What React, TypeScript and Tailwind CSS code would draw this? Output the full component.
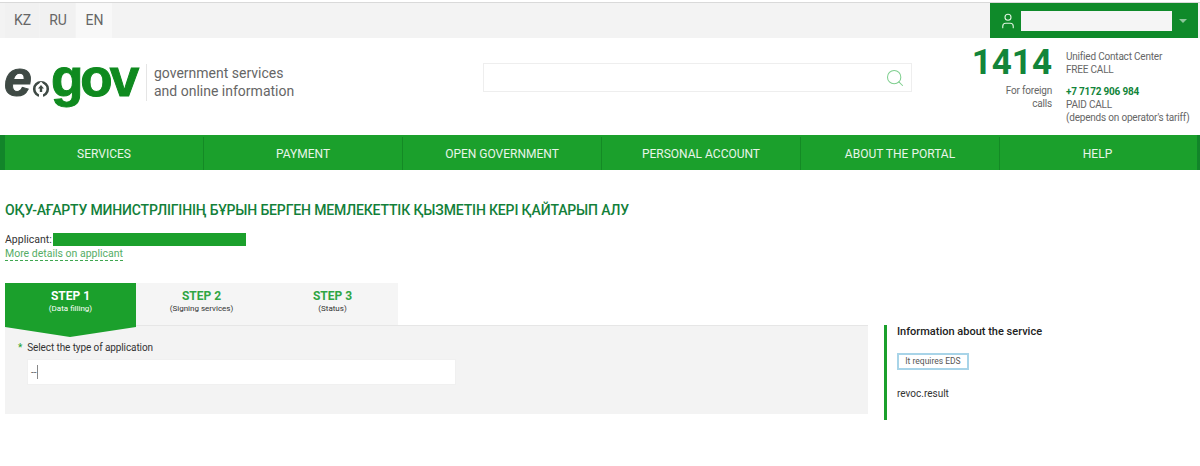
import { Search, User } from "lucide-react";

const font = { fontFamily: 'Roboto, sans-serif' };

const navItems = ["SERVICES", "PAYMENT", "OPEN GOVERNMENT", "PERSONAL ACCOUNT", "ABOUT THE PORTAL", "HELP"];

const steps = [
  { title: "STEP 1", sub: "(Data filling)", active: true },
  { title: "STEP 2", sub: "(Signing services)", active: false },
  { title: "STEP 3", sub: "(Status)", active: false },
];

const Logo = () => (
  <div className="relative h-[44px] w-[141px] shrink-0 whitespace-nowrap font-['Liberation_Sans']">
    <span className="absolute left-[-1px] top-[-6px] text-[50px] leading-[50px] font-bold italic text-[#3f4a45] [-webkit-text-stroke:1px_#3f4a45]">
      e
    </span>
    <svg width="18" height="18" viewBox="0 0 18 18" className="absolute left-[27px] top-[20px]">
      <circle cx="9" cy="9" r="6.8" fill="none" stroke="#3f4a45" strokeWidth="2.6" />
      <path d="M9 1.5 L14.5 7.5 H11 V17 H7 V7.5 H3.5 Z" fill="#fff" />
      <path d="M9 5 L12 8.5 H10.2 V12 H7.8 V8.5 H6 Z" fill="#3f4a45" />
    </svg>
    <span className="absolute left-[46px] top-[-7px] text-[53px] leading-[50px] font-bold tracking-[-3px] text-[#0f8a1f] [-webkit-text-stroke:1px_#0f8a1f]">
      gov
    </span>
  </div>
);

export default function App() {
  return (
    <div className="h-[466px] w-[1200px] overflow-hidden bg-white text-[#333]" style={font}>
      {/* Top bar */}
      <div className="mt-[2px] flex h-[36px] justify-between border-t border-[#d9d9d9] bg-[#f3f3f3] pl-[5px] pr-[2px]">
        <div className="flex gap-px text-[14px] text-[#666]">
          <div className="flex w-[34px] items-center justify-center bg-[#f1f1f1] pl-px">KZ</div>
          <div className="flex w-[35px] items-center justify-center bg-[#f1f1f1] pl-px">RU</div>
          <div className="flex w-[36px] items-center justify-center bg-[#f8f8f8] pl-px">EN</div>
        </div>
        <div className="flex w-[208px] items-center bg-[#0f8a2a]">
          <User size={18} strokeWidth={1.5} className="ml-[9px] shrink-0 text-[#dff3e0]" />
          <div className="ml-[4px] h-[20px] w-[151px] bg-[#f5f5f5]" />
          <div className="ml-[7px] h-0 w-0 border-x-[4px] border-t-[4px] border-x-transparent border-t-[#8cc79a]" />
        </div>
      </div>

      {/* Header */}
      <div className="flex h-[97px] pl-[5px]">
        <div className="mt-[22px]">
          <Logo />
        </div>
        <div className="mt-[26px] h-[37px] w-[136px] shrink-0 whitespace-nowrap border-l border-[#e5e5e5] pl-[7px] text-[14px] leading-[18px] text-[#666]">
          <div>government services</div>
          <div>and online information</div>
        </div>
        <div className="ml-[201px] mt-[25px] flex h-[29px] w-[429px] shrink-0 items-center justify-end border border-[#eeeeee] pr-[6px]">
          <Search size={20} strokeWidth={1.25} className="text-[#7fcf8f]" />
        </div>
        <div className="ml-[59px] mt-[6px] w-[81px] shrink-0 text-right">
          <div className="text-[35px] leading-[37px] font-bold text-[#12853a]">1414</div>
          <div className="mt-[4px] text-[10px] leading-[12.5px] tracking-[-0.2px] text-[#666]">
            For foreign
            <br />
            calls
          </div>
        </div>
        <div className="ml-[14px] mt-[12px] whitespace-nowrap text-[10px] leading-[13px] tracking-[-0.2px] text-[#666]">
          <div>Unified Contact Center</div>
          <div>FREE CALL</div>
          <div className="mt-[9px] font-bold text-[#12853a]">+7 7172 906 984</div>
          <div>PAID CALL</div>
          <div>(depends on operator's tariff)</div>
        </div>
      </div>

      {/* Nav */}
      <div className="flex h-[35px] border-x-[5px] border-r-[3px] border-[#12852a] bg-[#1ba02c] pt-[2px] text-[12px] text-[#e8f5e9]">
        {navItems.map((item, i) => (
          <div
            key={item}
            className={`flex w-[199px] shrink-0 items-center justify-center ${i < 5 ? "border-r border-[#148a25]" : "pr-[4px]"}`}
          >
            {item}
          </div>
        ))}
      </div>

      {/* Content */}
      <div className="px-[5px]">
        <h1 className="mt-[30px] whitespace-nowrap text-[14px] leading-[20px] font-medium tracking-[-0.15px] text-[#13803a]">
          ОҚУ-АҒАРТУ МИНИСТРЛІГІНІҢ БҰРЫН БЕРГЕН МЕМЛЕКЕТТІК ҚЫЗМЕТІН КЕРІ ҚАЙТАРЫП АЛУ
        </h1>

        <div className="mt-[12px] flex h-[14px] items-center text-[10.5px]">
          <span className="pt-[2px]">Applicant:</span>
          <div className="ml-[1px] h-[13px] w-[193px] bg-[#1ba02c]" />
        </div>
        <div className="mt-[1px] text-[10.5px] leading-[14px]">
          <span className="border-b border-dashed border-[#3fa650] text-[#55ad66]">More details on applicant</span>
        </div>

        <div className="mt-[22px] flex gap-[16px]">
          <div className="w-[863px] shrink-0">
            {/* Steps */}
            <div className="flex h-[42px] w-[393px] bg-[#f5f5f5]">
              {steps.map((s) => (
                <div
                  key={s.title}
                  className={`flex w-[131px] flex-col items-center ${s.active ? "bg-[#1ba02c] text-white" : "text-[#333]"}`}
                >
                  <div className={`mt-[5px] text-[12px] leading-[16px] font-bold ${s.active ? "text-white" : "text-[#2fa543]"}`}>
                    {s.title}
                  </div>
                  <div className="text-[8px] leading-[10px]">{s.sub}</div>
                </div>
              ))}
            </div>
            {/* Form */}
            <div className="relative h-[89px] border-t border-[#e6e6e6] bg-[#f3f3f3] pl-[13px]">
              <svg width="131" height="12" className="absolute left-0 top-[-1px]">
                <polygon points="0,0 131,0 131,2 65,12 0,2" fill="#1ba02c" />
              </svg>
              <div className="pt-[15px] text-[10px] leading-[14px] tracking-[-0.1px]">
                <span className="mr-[5px] text-[#1ba02c]">*</span>Select the type of application
              </div>
              <div className="ml-[9px] mt-[4px] flex h-[26px] w-[429px] items-center border border-[#f0f0f0] bg-white pl-[3px] text-[10px] text-[#666]">
                --
                <span className="h-[14px] w-px bg-[#888]" />
              </div>
            </div>
          </div>

          {/* Info */}
          <div className="mt-[42px] h-[95px] border-l-[3px] border-[#1ba02c] pl-[10px]">
            <div className="text-[11px] leading-[14px] font-medium text-[#222]">Information about the service</div>
            <div className="mt-[14px] flex h-[17px] w-[72px] items-center justify-center border-2 border-[#a8d4e8] text-[8.5px] text-[#555]">
              It requires EDS
            </div>
            <div className="mt-[17px] text-[10px] leading-[14px]">revoc.result</div>
          </div>
        </div>
      </div>
    </div>
  );
}
